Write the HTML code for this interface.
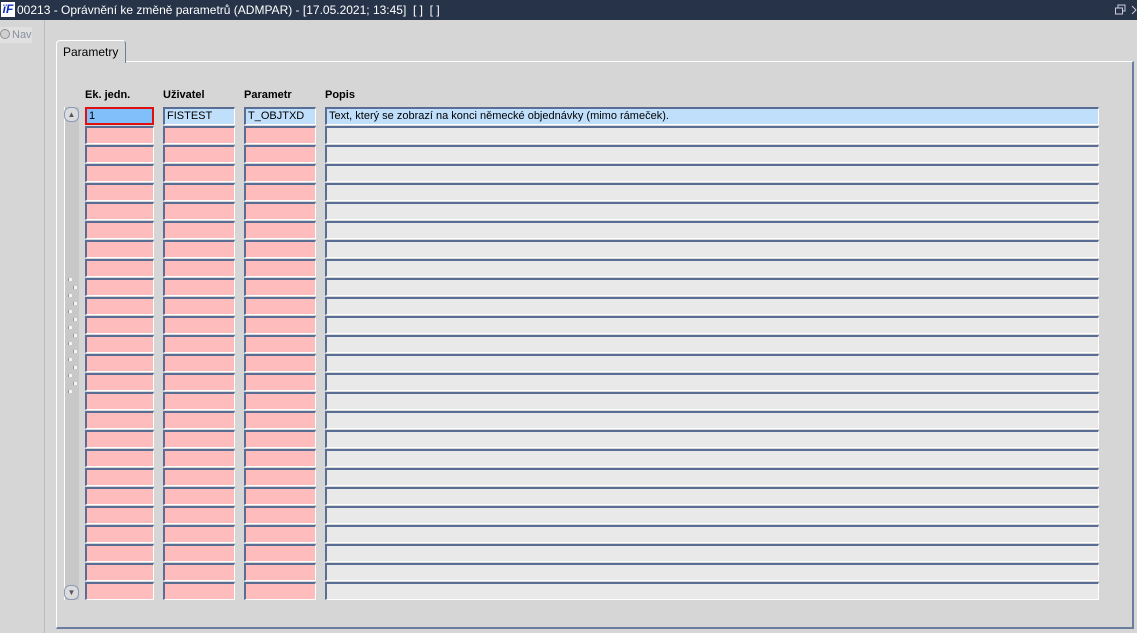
<!DOCTYPE html>
<html><head><meta charset="utf-8"><style>
body{margin:0;width:1137px;height:633px;overflow:hidden;background:#d6d6d6;font-family:"Liberation Sans",sans-serif;position:relative}
.title{position:absolute;left:0;top:0;width:1137px;height:20px;background:#263349;color:#fff;font-size:12px;line-height:20px;white-space:nowrap}
.title span{position:absolute;left:17px;top:0}
.logo{position:absolute;left:1px;top:2px;width:14px;height:15px;background:#fff;color:#1030c0;font:italic bold 12px/15px "Liberation Sans";text-align:center}
.left{position:absolute;left:0;top:20px;width:44px;height:613px;background:#d6d6d6;border-right:1px solid #b8bcc8}
.nav{position:absolute;left:0;top:27px;width:32px;height:16px;background:#e0e0e0;color:#8890a0;font-size:11px;line-height:16px;white-space:nowrap;overflow:hidden}
.nav i{display:inline-block;width:8px;height:8px;border-radius:50%;border:1px solid #909090;background:#d0d0d0;margin:0 2px 0 0;vertical-align:-1px}
.tab{position:absolute;left:56px;top:40px;width:68px;height:22px;border:1px solid #fff;border-bottom:none;border-right:1px solid #6a7ca0;border-radius:4px 4px 0 0;font-size:12px;line-height:23px;text-indent:6px;color:#000;background:#d6d6d6;z-index:2}
.panel{position:absolute;left:56px;top:61px;width:1075px;height:565px;border-top:1px solid #fff;border-left:1px solid #fff;border-right:2px solid #6a7ca0;border-bottom:2px solid #6a7ca0}
.hdr{position:absolute;top:89px;font-size:11px;font-weight:bold}
.f{position:absolute;box-sizing:border-box;border-top:2px solid #5a6e95;border-left:2px solid #5a6e95;border-right:1px solid #fff;border-bottom:1px solid #fff;height:18px;font-size:11px;line-height:15px;padding-left:2px;overflow:hidden;white-space:nowrap}
.p{background:#ffbcbc}.g{background:#e9e9e9}.b{background:#c0dffb}
.sb{position:absolute;left:64px;top:107px;width:14px;height:493px;background:#c8c8c8;border-left:1px solid #fff}
.btn{position:absolute;left:64px;width:15px;height:15px;border:1px solid #8a9ab8;border-radius:6px;background:#dcdcdc;box-sizing:border-box;font-size:8px;line-height:13px;text-align:center;color:#556}
</style></head><body>
<div class="title"><div class="logo">ïF</div><span>00213 - Oprávnění ke změně parametrů (ADMPAR) - [17.05.2021; 13:45]&nbsp; [ ]&nbsp; [ ]</span>
<svg style="position:absolute;left:1115px;top:4px" width="22" height="12"><rect x="3" y="1" width="7" height="6" fill="none" stroke="#ccd" /><rect x="0.5" y="4" width="7" height="6" fill="#263349" stroke="#ccd"/><path d="M17 2l4 4-4 4" stroke="#ccd" fill="none"/></svg></div>
<div class="left"></div>
<div class="nav"><i></i>Nav</div>
<div class="tab">Parametry</div>
<div class="panel"></div>
<div class="hdr" style="left:85px">Ek. jedn.</div>
<div class="hdr" style="left:163px">Uživatel</div>
<div class="hdr" style="left:244px">Parametr</div>
<div class="hdr" style="left:325px">Popis</div>
<div class="sb"></div>
<div class="btn" style="top:107px">▲</div>
<div class="btn" style="top:585px">▼</div>
<div class="f" style="left:85px;top:107px;width:69px;background:#80bffa;border:2px solid #e01010">1</div>
<div class="f b" style="left:163px;top:107px;width:72px">FISTEST</div>
<div class="f b" style="left:244px;top:107px;width:72px">T_OBJTXD</div>
<div class="f b" style="left:325px;top:107px;width:774px">Text, který se zobrazí na konci německé objednávky (mimo rámeček).</div>
<script>
var h='';for(var i=1;i<26;i++){var t=107+i*19;
h+='<div class="f p" style="left:85px;top:'+t+'px;width:69px"></div><div class="f p" style="left:163px;top:'+t+'px;width:72px"></div><div class="f p" style="left:244px;top:'+t+'px;width:72px"></div><div class="f g" style="left:325px;top:'+t+'px;width:774px"></div>';}
for(var j=0;j<15;j++){h+='<div style="position:absolute;left:'+(j%2?73:68)+'px;top:'+(278+j*8)+'px;width:3px;height:3px;background:#f4f4f4;border-left:1px solid #8898b8"></div>';}
document.write(h);
</script>
</body></html>
